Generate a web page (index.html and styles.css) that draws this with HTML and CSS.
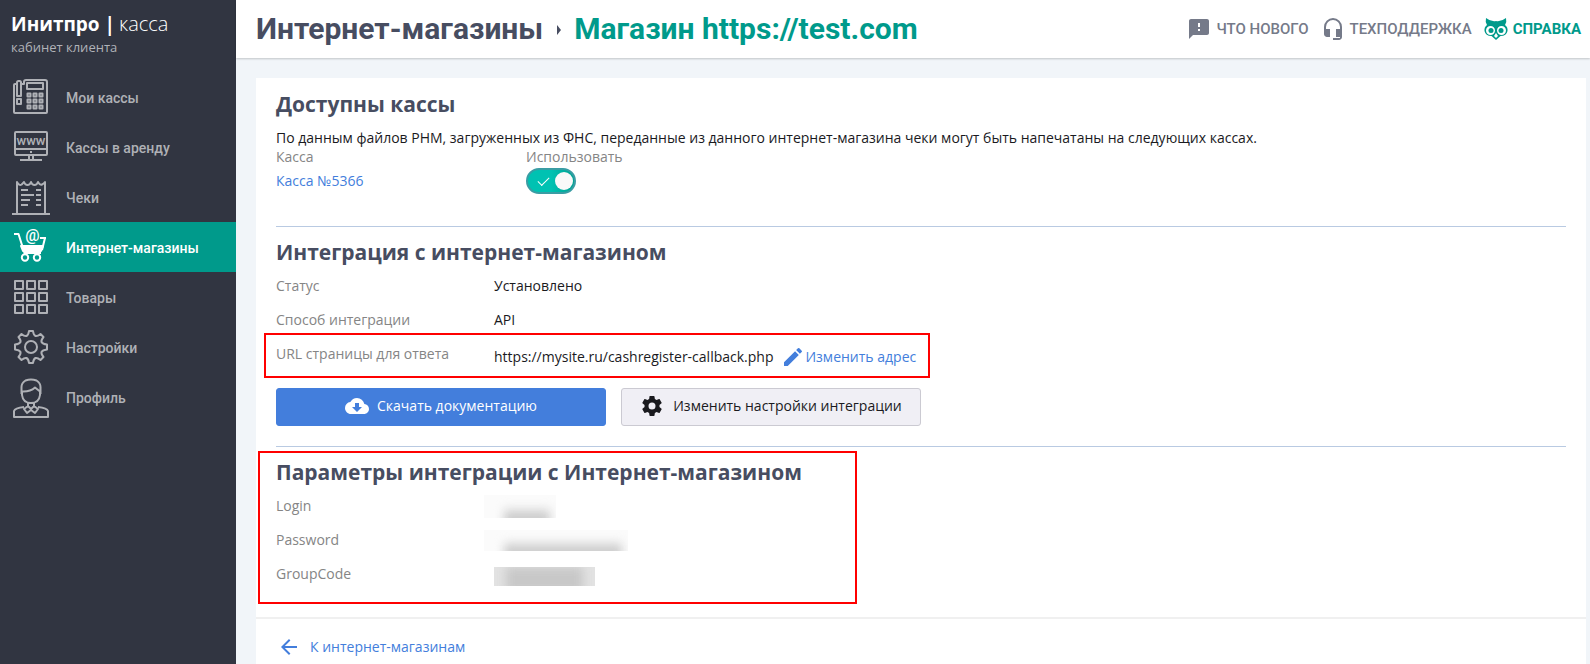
FILE: index.html
```html
<!DOCTYPE html>
<html lang="ru">
<head>
    <meta charset="UTF-8">
    <meta name="viewport" content="width=device-width, initial-scale=1.0">
    <title>Инитпро | касса</title>
    <link rel="stylesheet" href="styles.css">
</head>
<body>
    <aside class="sidebar">
        <div class="logo">
            <div class="logo-name"><b>Инитпро |</b><span>касса</span></div>
            <div class="logo-sub">кабинет клиента</div>
        </div>
        <nav class="menu">
            <a href="#">
                <svg viewBox="0 0 38 38"><path d="M3 5h2V3.500Q5 2 6.500 2h1Q9 2 9 3.500V5h3V3q0-2 2-2h19q2 0 2 2v30q0 1-1 1H3q-1 0-1-1V6q0-1 1-1zM5 5v12h4V5M5 20h4v5H5zM15 4h16v6H15z"/><path d="M15.500 14.500h3v3h-3zM21.500 14.500h3v3h-3zM27.500 14.500h3v3h-3zM15.500 20.500h3v3h-3zM21.500 20.500h3v3h-3zM27.500 20.500h3v3h-3zM15.500 26.500h3v3h-3zM21.500 26.500h3v3h-3zM27.500 26.500h3v3h-3z"/></svg>
                Мои кассы
            </a>
            <a href="#">
                <svg viewBox="0 0 38 38"><path d="M4 3h30q1 0 1 1v21q0 1-1 1H4q-1 0-1-1V4q0-1 1-1zM3 20h32M17 26v5M21 26v5M8 31h22M18 23h2"/><text x="19" y="16" text-anchor="middle">www</text></svg>
                Кассы в аренду
            </a>
            <a href="#">
                <svg viewBox="0 0 38 38"><path d="M0 35h38M5 35V3q2 4 4.700 2.500Q11 4 12 3q1 3 3.500 3T19 3q1 3 3.500 3T26 3q2 3.500 4 2.500T33 3v32M9 11h7M24 11h5M9 16h13M24 16h5M9 21h9M24 21h5M9 26h7M24 26h5"/></svg>
                Чеки
            </a>
            <a href="#" class="active">
                <svg viewBox="0 0 38 38"><path d="M2 5h4.500l6 19H29M33 9l-3 12M28 9h6"/><path class="solid" d="M9 17h22l-2 5H11z"/><circle cx="13" cy="28.500" r="3.200"/><circle cx="25" cy="28.500" r="3.200"/><text class="at" x="20.500" y="12" text-anchor="middle">@</text></svg>
                Интернет-магазины
            </a>
            <a href="#">
                <svg viewBox="0 0 38 38"><path d="M3 2h8v8H3zM15 2h8v8h-8zM27 2h8v8h-8zM3 14h8v8H3zM15 14h8v8h-8zM27 14h8v8h-8zM3 26h8v8H3zM15 26h8v8h-8zM27 26h8v8h-8z"/></svg>
                Товары
            </a>
            <a href="#">
                <svg viewBox="0 0 38 38"><circle cx="19" cy="18" r="6"/><path d="M17 2h4q.5 4 2.500 5 2 .5 5-2l3 3q-2.500 3-2 5 1 2 5.500 2.500v5q-4.500.5-5.500 2.500-.5 2 2 5l-3 3q-3-2.500-5-2-2 1-2.500 5h-4q-.5-4-2.500-5-2-.5-5 2l-3-3q2.500-3 2-5-1-2-5.500-2.500v-5q4.500-.5 5.500-2.500.5-2-2-5l3-3q3 2.500 5 2 2-1 2.500-5z"/></svg>
                Настройки
            </a>
            <a href="#">
                <svg viewBox="0 0 38 38"><path d="M9.500 15V8q0-4 4-6.500 5.500-2 11 0 4 2.500 4 6.500v7M10 12.500q8 .5 13-4l5 4M10 12v4q1 8 9 8t9-8v-4M16 24v3l-4 3 3 4 4-3 4 3 3-4-4-3v-3M16 27l3 3 3-3M12 28Q3 29 2 32v6h34v-6q-1-3-10-4"/></svg>
                Профиль
            </a>
        </nav>
    </aside>

    <div class="page">
        <header class="header">
            <h1><a href="#">Интернет-магазины</a><i class="arrow"></i><span>Магазин https://test.com</span></h1>
            <div class="header-links">
                <a href="#">
                    <svg viewBox="0 0 24 24"><path d="M20 2H4c-1.100 0-2 .9-2 2v18l4-4h14c1.100 0 2-.9 2-2V4c0-1.100-.9-2-2-2zm-7 12h-2v-2h2v2zm0-4h-2V6h2v4z"/></svg>
                    ЧТО НОВОГО
                </a>
                <a href="#">
                    <svg viewBox="0 0 24 24"><path d="M12 1a9 9 0 0 0-9 9v7c0 1.660 1.340 3 3 3h3v-8H5v-2a7 7 0 0 1 14 0v2h-4v8h4v1h-7v2h6c1.660 0 3-1.340 3-3V10a9 9 0 0 0-9-9z"/></svg>
                    ТЕХПОДДЕРЖКА
                </a>
                <a href="#" class="help">
                    <svg viewBox="0 0 24 24"><path fill-rule="evenodd" d="M2 1q5 4 10 3 5 1 10-3 1 4-1 7 3 2 2.500 6-1 5-7 5L12 23l-4.500-4q-6 0-7-5Q0 10 3 8 1 5 2 1zM6.500 9a4.500 4.500 0 1 0 0 9 4.500 4.500 0 0 0 0-9zm11 0a4.500 4.500 0 1 0 0 9 4.500 4.500 0 0 0 0-9zM12 16l-2 3 2 2 2-2z"/><circle cx="7" cy="13.500" r="2.500"/><circle cx="17" cy="13.500" r="2.500"/></svg>
                    СПРАВКА
                </a>
            </div>
        </header>

        <main class="card">
            <section>
                <h2>Доступны кассы</h2>
                <p>По данным файлов РНМ, загруженных из ФНС, переданные из данного интернет-магазина чеки могут быть напечатаны на следующих кассах.</p>
                <table class="cash">
                    <thead>
                        <tr><th>Касса</th><th id="use">Использовать</th></tr>
                    </thead>
                    <tbody>
                        <tr><td><a href="#">Касса №5366</a></td><td><input type="checkbox" class="toggle" aria-labelledby="use" checked></td></tr>
                    </tbody>
                </table>
            </section>

            <section>
                <h2>Интеграция с интернет-магазином</h2>
                <dl>
                    <div class="row"><dt>Статус</dt><dd>Установлено</dd></div>
                    <div class="row"><dt>Способ интеграции</dt><dd>API</dd></div>
                    <div class="row marked marked-url">
                        <dt>URL страницы для ответа</dt>
                        <dd class="url">https://mysite.ru/cashregister-callback.php
                            <a href="#"><svg viewBox="0 0 24 24"><path d="M3 17.250V21h3.750L17.810 9.940l-3.750-3.750L3 17.250zM20.710 7.040a1 1 0 0 0 0-1.410l-2.340-2.340a1 1 0 0 0-1.410 0l-1.830 1.830 3.750 3.750 1.830-1.830z"/></svg>Изменить адрес</a>
                        </dd>
                    </div>
                </dl>
                <div class="buttons">
                    <button class="primary">
                        <svg viewBox="0 0 24 24"><path d="M19.350 10.040A7.490 7.490 0 0 0 12 4C9.110 4 6.600 5.640 5.350 8.040A5.994 5.994 0 0 0 0 14c0 3.310 2.690 6 6 6h13c2.760 0 5-2.240 5-5 0-2.640-2.050-4.780-4.650-4.960zM17 13l-5 5-5-5h3V9h4v4h3z"/></svg>
                        Скачать документацию
                    </button>
                    <button class="secondary">
                        <svg viewBox="0 0 24 24"><path d="M19.430 12.980c.04-.32.07-.64.07-.98s-.03-.66-.07-.98l2.110-1.650c.19-.15.24-.42.12-.64l-2-3.460c-.12-.22-.39-.3-.61-.22l-2.490 1c-.52-.4-1.080-.73-1.690-.98l-.38-2.650A.488.488 0 0 0 14 2h-4c-.25 0-.46.180-.49.420l-.38 2.650c-.61.250-1.170.590-1.690.980l-2.490-1c-.23-.09-.49 0-.61.220l-2 3.460c-.13.220-.07.490.120.640l2.110 1.650c-.04.320-.07.650-.07.980s.03.660.070.980l-2.110 1.650c-.19.150-.24.420-.12.640l2 3.460c.12.220.39.300.61.220l2.490-1c.52.400 1.080.730 1.690.980l.38 2.650c.03.240.24.420.49.420h4c.25 0 .46-.18.490-.42l.38-2.650c.61-.25 1.170-.59 1.690-.98l2.490 1c.23.090.49 0 .61-.22l2-3.460c.12-.22.070-.49-.12-.64l-2.110-1.650zM12 15.500a3.500 3.500 0 1 1 0-7 3.500 3.500 0 0 1 0 7z"/></svg>
                        Изменить настройки интеграции
                    </button>
                </div>
            </section>

            <section class="params">
                <div class="marked marked-params">
                    <h2>Параметры интеграции с Интернет-магазином</h2>
                    <dl>
                        <div class="row"><dt>Login</dt><dd><span class="hidden-value login"></span></dd></div>
                        <div class="row"><dt>Password</dt><dd><span class="hidden-value password"></span></dd></div>
                        <div class="row"><dt>GroupCode</dt><dd><span class="hidden-value group"></span></dd></div>
                    </dl>
                </div>
            </section>

            <footer>
                <a href="#"><svg viewBox="0 0 24 24"><path d="M20 11H7.830l5.590-5.590L12 4l-8 8 8 8 1.410-1.410L7.830 13H20v-2z"/></svg>К интернет-магазинам</a>
            </footer>
        </main>
    </div>
</body>
</html>
```
FILE: styles.css
```css
*,
*::before,
*::after {
  box-sizing: border-box;
}

body {
  display: flex;
  margin: 0;
  min-height: 100vh;
  background-color: #f1f5f9;
  color: #1a1a1e;
  font-family: "Open Sans", sans-serif;
  font-size: 14px;
  line-height: 20px;
}

a {
  color: #437edc;
  text-decoration: none;
}

h1, h2, p, dl, dd {
  margin: 0;
}

svg {
  flex-shrink: 0;
  fill: currentColor;
}

/* sidebar */
.sidebar {
  flex: 0 0 236px;
  background-color: #313541;
}

.logo {
  height: 72px;
  padding: 11px;
  color: #b0b2b8;
}

.logo-name {
  display: flex;
  gap: 4px;
  color: #fff;
  font-size: 20px;
  line-height: 26px;
}

.logo-name b {
  font-size: 19px;
  font-weight: 700;
}

.logo-name span {
  font-weight: 300;
}

.logo-sub {
  font-size: 13px;
}

.menu a {
  display: flex;
  align-items: center;
  gap: 16px;
  height: 50px;
  padding: 2px 0 0 12px;
  color: #afb1b6;
  font-family: Roboto, sans-serif;
  font-weight: 500;
}

.menu a.active {
  background-color: #009a8b;
  color: #fff;
}

.menu svg {
  width: 38px;
  height: 38px;
  overflow: visible;
  fill: none;
  stroke: currentColor;
  stroke-width: 2;
  stroke-linejoin: round;
}

.menu svg text {
  fill: currentColor;
  stroke: none;
  font-size: 13px;
}

.menu svg .at {
  font-size: 16px;
}

.menu svg .solid {
  fill: currentColor;
}

/* header */
.page {
  flex: 1;
  min-width: 0;
  display: flex;
  flex-direction: column;
}

.header {
  display: flex;
  justify-content: space-between;
  align-items: center;
  height: 58px;
  padding: 0 9px 0 20px;
  background-color: #fff;
  box-shadow: 0 1px 2px rgba(0, 0, 0, 0.2);
  font-family: Roboto, sans-serif;
}

h1 {
  display: flex;
  align-items: center;
  color: #009a8b;
  font-size: 30px;
  line-height: 36px;
}

h1 a {
  color: #474d61;
}

.arrow {
  margin: 2px 13px 0 14px;
  border: 5px solid transparent;
  border-left: 4px solid #474d61;
  border-right: 0;
}

.header-links {
  display: flex;
  gap: 12px;
}

.header-links a {
  display: flex;
  align-items: center;
  gap: 5px;
  color: #757a89;
  font-size: 15px;
  font-weight: 500;
}

.header-links svg {
  width: 24px;
  height: 24px;
}

.header-links .help {
  color: #009a8b;
  font-weight: 700;
}

/* content */
.card {
  flex: 1;
  margin: 20px 4px 0 20px;
  background-color: #fff;
}

section {
  margin: 0 20px;
  padding: 11px 0 20px;
  border-bottom: 1px solid #b9cae2;
}

section:first-child {
  padding: 12px 0 32px;
}

h2 {
  margin-bottom: 3px;
  color: #474d61;
  font-size: 21px;
  line-height: 28px;
}

p {
  margin-top: 10px;
}

.cash {
  border-collapse: collapse;
}

.cash th,
.cash td {
  min-width: 250px;
  padding: 0;
  text-align: left;
}

.cash th {
  padding-bottom: 2px;
  color: #858585;
  font-weight: 400;
  line-height: 18px;
}

.cash td {
  height: 26px;
}

.toggle {
  appearance: none;
  position: relative;
  display: block;
  width: 50px;
  height: 26px;
  margin: 0;
  border: 2px solid #3a9da4;
  border-radius: 13px;
  background: linear-gradient(to right, #00c2b2 50%, #00a292);
}

.toggle::before {
  content: "";
  position: absolute;
  top: 2px;
  right: 1px;
  width: 18px;
  height: 18px;
  border-radius: 50%;
  background-color: #f9f9f9;
}

.toggle::after {
  content: "";
  position: absolute;
  top: 7px;
  left: 10px;
  width: 11px;
  height: 6px;
  border: solid #fff;
  border-width: 0 0 1px 1px;
  transform: rotate(-45deg);
}

.row {
  display: grid;
  grid-template-columns: 218px 1fr;
  padding: 7px 0;
}

.row dt {
  color: #858585;
}

.url {
  display: flex;
  align-items: center;
  gap: 8px;
  height: 26px;
}

.url a,
footer a {
  display: flex;
  align-items: center;
}

.url svg {
  width: 24px;
  height: 24px;
}

.marked {
  position: relative;
}

.marked::after {
  content: "";
  position: absolute;
  border: 2px solid #f00;
  pointer-events: none;
}

.marked-url::after {
  top: -4px;
  left: -12px;
  width: 666px;
  height: 45px;
}

.marked-params::after {
  top: -7px;
  left: -18px;
  width: 599px;
  height: 153px;
}

.buttons {
  display: flex;
  gap: 15px;
  margin-top: 11px;
}

button {
  display: flex;
  justify-content: center;
  align-items: center;
  height: 38px;
  padding: 0 6px 2px;
  border: 1px solid #437edc;
  border-radius: 3px;
  font: inherit;
}

button svg {
  width: 24px;
  height: 24px;
}

.primary {
  gap: 8px;
  width: 330px;
  background-color: #437edc;
  color: #fff;
}

.secondary {
  gap: 9px;
  width: 300px;
  border-color: #cbcad2;
  background-color: #f0eff5;
  color: #1a1a1e;
}

.params {
  padding-bottom: 26px;
  border-bottom: 0;
}

.params .row {
  height: 34px;
  padding: 5px 0;
  align-items: center;
}

/* blurred credentials */
.hidden-value {
  display: block;
  margin-left: -10px;
  overflow: hidden;
  background-color: #fbfbfb;
}

.hidden-value::before {
  content: "";
  display: block;
  height: 140%;
  margin: 0 6px 0 20px;
  background: linear-gradient(transparent 35%, #ccc 60%);
  filter: blur(5px);
}

.login {
  width: 72px;
  height: 23px;
}

.password {
  width: 144px;
  height: 21px;
}

.group {
  width: 101px;
  height: 19px;
  margin: 4px 0 0;
  background-color: #e2e2e2;
}

.group::before {
  margin: 0 12px;
  background: #c8c8c8;
}

footer {
  padding: 18px 20px;
  border-top: 2px solid #f0f0f0;
}

footer a {
  gap: 8px;
  height: 20px;
}

footer svg {
  width: 26px;
  height: 24px;
}
```
